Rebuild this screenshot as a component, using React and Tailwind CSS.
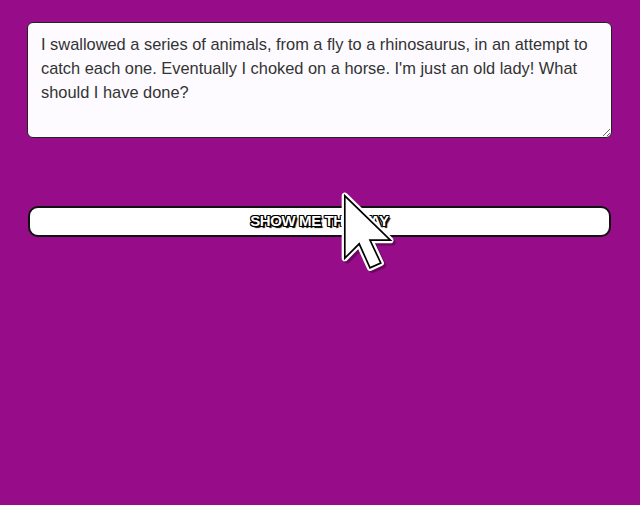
import React from "react";

export default function App() {
  return (
    <div className="min-h-[505px] w-[640px] bg-[#970c88] px-[27px] pt-[22px] font-['Liberation_Sans',Arial,sans-serif]">
      <textarea
        readOnly
        className="block h-[116px] w-[585px] resize-y rounded-[6px] border border-[#222] bg-[#fdfbff] px-[13px] pt-[9px] text-[16.4px] leading-[24px] text-[#333] outline-none"
        defaultValue="I swallowed a series of animals, from a fly to a rhinosaurus, in an attempt to catch each one. Eventually I choked on a horse. I'm just an old lady! What should I have done?"
      />
      <div className="relative mt-[68px] ml-px w-[583px]">
        <button className="flex h-[31px] w-full items-center justify-center rounded-[10px] border-2 border-[#111] bg-white text-[15px] font-bold tracking-[-0.4px] text-white [text-shadow:1px_0_0_#000,-1px_0_0_#000,0_1px_0_#000,0_-1px_0_#000,1px_1px_0_#000,-1px_-1px_0_#000,1px_-1px_0_#000,-1px_1px_0_#000,2px_2px_1px_#000]">
          SHOW ME THE WAY
        </button>
        <svg
          className="absolute left-[312px] top-[-15px]"
          width="60"
          height="96"
          viewBox="0 0 25 40"
        >
          <path
            d="M2 2 L2 28 L8 22 L12.5 32 L17 30 L12.5 20.5 L21 20.5 Z"
            fill="#000"
            opacity="0.3"
            transform="translate(1 1)"
            stroke="#000"
            strokeWidth="2.4"
            strokeLinejoin="round"
          />
          <path
            d="M2 2 L2 28 L8 22 L12.5 32 L17 30 L12.5 20.5 L21 20.5 Z"
            fill="#fff"
            stroke="#fff"
            strokeWidth="2.6"
            strokeLinejoin="round"
          />
          <path
            d="M2 2 L2 28 L8 22 L12.5 32 L17 30 L12.5 20.5 L21 20.5 Z"
            fill="#fff"
            stroke="#000"
            strokeWidth="0.7"
            strokeLinejoin="miter"
          />
        </svg>
      </div>
    </div>
  );
}
